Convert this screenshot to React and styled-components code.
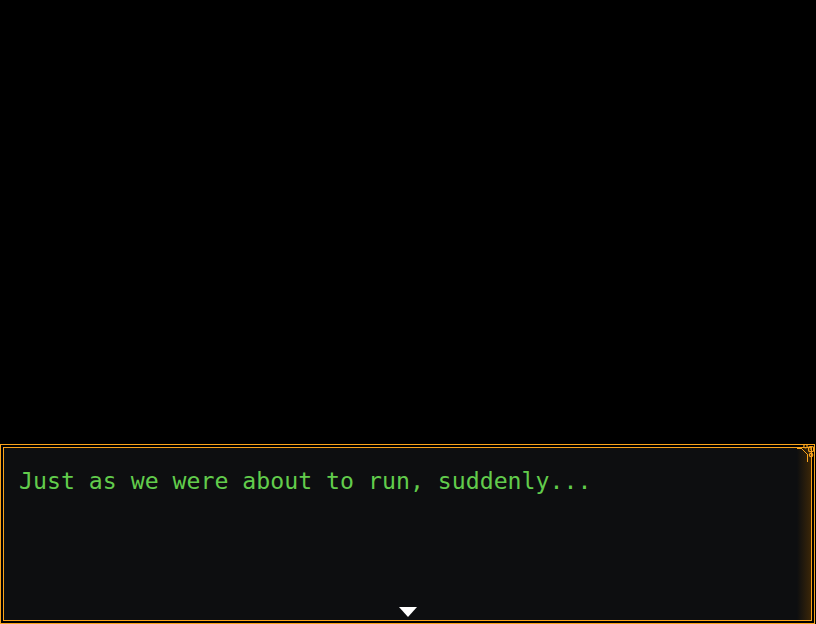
import React from 'react';
import styled, { createGlobalStyle } from 'styled-components';

const GlobalStyle = createGlobalStyle`
  html, body {
    margin: 0;
    padding: 0;
    background: #000;
  }
`;

function CornerOrnament() {
  return (
    <Ornament width="18" height="18" viewBox="0 0 18 18">
      <g fill="none" stroke="#f9a31c" strokeWidth="1.2">
        <path d="M0 4.5 H4.5 L10.5 10.5 V18" shapeRendering="crispEdges" />
        <circle cx="8.5" cy="2.2" r="1.7" />
        <rect x="11.6" y="2.6" width="5" height="5" rx="1.4" />
        <circle cx="14.1" cy="11" r="1.7" />
      </g>
      <circle cx="14.1" cy="5.1" r="1" fill="#f9a31c" />
    </Ornament>
  );
}

function App() {
  return (
    <>
      <GlobalStyle />
      <Screen>
        <Stage />
        <MessageWindow>
          <MessageInner>
            <MessageText>Just as we were about to run, suddenly...</MessageText>
          </MessageInner>
          <CornerOrnament />
          <NextArrow />
        </MessageWindow>
      </Screen>
    </>
  );
}

export default App;

const Screen = styled.div`
  width: 816px;
  height: 624px;
  display: flex;
  flex-direction: column;
  background: #000;
  overflow: hidden;
`;

const Stage = styled.div`
  flex: 1;
`;

const MessageWindow = styled.div`
  position: relative;
  width: 815px;
  height: 180px;
  box-sizing: border-box;
  border: 1px solid #f9a31c;
  padding: 2px;
  background: #000;
`;

const MessageInner = styled.div`
  height: 100%;
  box-sizing: border-box;
  border: 1px solid #f9a31c;
  background: linear-gradient(to right, #0d0e10 calc(100% - 14px), #3a2608 100%);
  padding: 18px 15px;
`;

const MessageText = styled.p`
  margin: 0;
  font-family: "DejaVu Sans Mono", "Liberation Mono", monospace;
  font-size: 23.2px;
  line-height: 30px;
  color: #62cc4c;
  white-space: pre;
`;

const Ornament = styled.svg`
  position: absolute;
  top: -1px;
  right: -1px;
`;

const NextArrow = styled.div`
  position: absolute;
  bottom: 6px;
  left: 50%;
  transform: translateX(-50%);
  width: 0;
  height: 0;
  border-left: 9px solid transparent;
  border-right: 9px solid transparent;
  border-top: 10px solid #fff;
`;
